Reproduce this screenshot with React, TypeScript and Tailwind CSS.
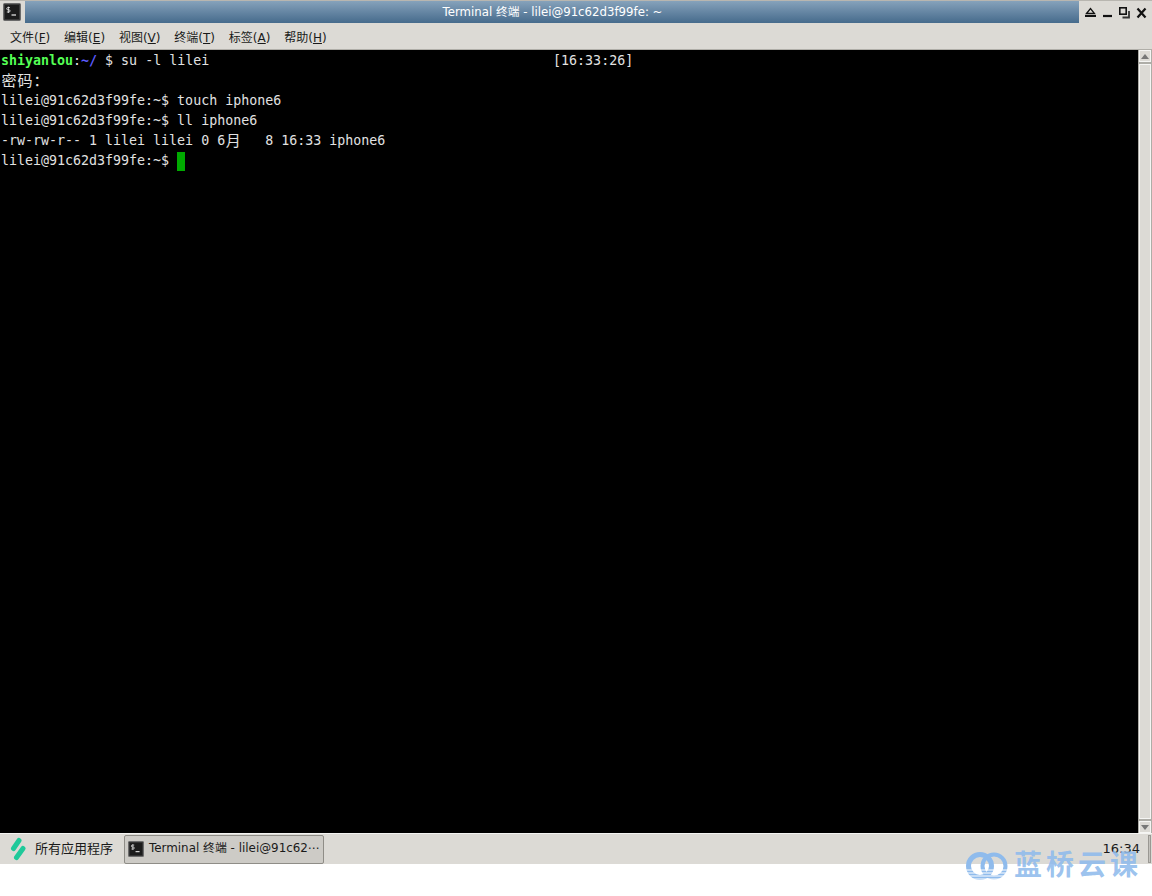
const termFont = "[font-family:'DejaVu_Sans_Mono','Noto_Sans_CJK_SC',monospace]";

function TerminalIcon({ size = 18 }: { size?: number }) {
  return (
    <svg width={size} height={size} viewBox="0 0 18 18">
      <rect x="0.5" y="0.5" width="17" height="17" rx="1" fill="#3a3a3a" stroke="#6a6a6a" />
      <rect x="2" y="2" width="14" height="14" fill="#1c1c1c" />
      <path d="M7 4.6H4.8a1 1 0 0 0 0 2.2h1.2a1 1 0 0 1 0 2.2H3.8M5.4 3.6v6.4" stroke="#eee" strokeWidth="0.8" fill="none" />
      <path d="M8.5 12h4.5" stroke="#eee" strokeWidth="1.2" />
    </svg>
  );
}

function MenuItem({ label, hot }: { label: string; hot: string }) {
  return (
    <span className="whitespace-nowrap">
      {label}(<span className="underline">{hot}</span>)
    </span>
  );
}

// double width glyph in the terminal grid
function Wide({ children }: { children: string }) {
  return <span className="inline-block w-4 text-[15px] leading-[20px] text-center align-top">{children}</span>;
}

const menus = [
  ["文件", "F"],
  ["编辑", "E"],
  ["视图", "V"],
  ["终端", "T"],
  ["标签", "A"],
  ["帮助", "H"],
];

export default function App() {
  return (
    <div className="w-[1152px] h-[896px] bg-white flex flex-col overflow-hidden font-['Liberation_Sans','Noto_Sans_CJK_SC',sans-serif] relative">
      {/* title bar */}
      <div className="h-[23px] flex items-stretch bg-[#dcdad5] border-t border-[#b8b6b0] shrink-0">
        <div className="w-[25px] flex items-center justify-start pl-[3px]">
          <TerminalIcon size={18} />
        </div>
        <div className="flex-1 bg-gradient-to-b from-[#86a2bb] to-[#466b8c] flex items-center justify-center pt-[2px] pl-px text-white text-[11.75px] [font-family:'DejaVu_Sans','Noto_Sans_CJK_SC',sans-serif]">
          Terminal 终端 - lilei@91c62d3f99fe: ~
        </div>
        <div className="w-[73px]">
          <svg width="73" height="22" viewBox="0 0 73 22">
            <path d="M7.5 12.5l4-5 4 5z" fill="none" stroke="#111" strokeWidth="1.3" />
            <path d="M6 15h11" stroke="#111" strokeWidth="2" />
            <path d="M24 15h9" stroke="#111" strokeWidth="2.2" />
            <rect x="40.8" y="6.8" width="6.4" height="6.4" fill="none" stroke="#111" strokeWidth="1.6" />
            <path d="M50 10v6.5h-6.5" fill="none" stroke="#333" strokeWidth="1.8" />
            <path d="M58.5 7.5l8 9M66.5 7.5l-8 9" stroke="#111" strokeWidth="2.2" />
          </svg>
        </div>
      </div>

      {/* menu bar */}
      <div className="h-[27px] bg-[#dcdad5] border-b border-[#b0aea8] flex items-center gap-[13.8px] pl-[10px] pt-[3px] text-[12px] text-[#1a1a1a] shrink-0 [font-family:'DejaVu_Sans','Noto_Sans_CJK_SC',sans-serif]">
        {menus.map(([label, hot]) => (
          <MenuItem key={hot} label={label} hot={hot} />
        ))}
      </div>

      {/* terminal + scrollbar */}
      <div className="h-[783px] flex shrink-0">
        <div className={`flex-1 bg-black text-[#e2e2e2] text-[13.3px] leading-[20px] pt-px pl-px whitespace-pre ${termFont}`}>
          <div className="flex">
            <span className="font-bold text-[#55ff55]">shiyanlou</span>
            <span>:</span>
            <span className="font-bold text-[#5c5cff]">~/</span>
            <span className="w-[456px]"> $ su -l lilei</span>
            <span>[16:33:26]</span>
          </div>
          <div>
            <Wide>密</Wide>
            <Wide>码</Wide>
            <Wide>：</Wide>
          </div>
          <div>lilei@91c62d3f99fe:~$ touch iphone6</div>
          <div>lilei@91c62d3f99fe:~$ ll iphone6</div>
          <div>
            -rw-rw-r-- 1 lilei lilei 0 6<Wide>月</Wide>   8 16:33 iphone6
          </div>
          <div className="flex">
            <span>lilei@91c62d3f99fe:~$ </span>
            <span className="w-2 h-[19px] mt-px bg-[#00aa00]" />
          </div>
        </div>
        <div className="w-[14px] bg-[#aeada7] flex flex-col pl-px pr-px">
          <div className="h-[12px] bg-[#dcdad5] border border-[#f5f5f3] flex items-center justify-center">
            <div className="w-0 h-0 border-x-[4px] border-x-transparent border-b-[5px] border-b-[#777]" />
          </div>
          <div className="flex-1 my-[2px] bg-[#dcdad5] border border-[#f5f5f3]" />
          <div className="h-[12px] bg-[#dcdad5] border border-[#f5f5f3] flex items-center justify-center">
            <div className="w-0 h-0 border-x-[4px] border-x-transparent border-t-[5px] border-t-[#777]" />
          </div>
        </div>
      </div>

      {/* task bar */}
      <div className="h-[31px] bg-[#dcdad5] border-t border-[#f4f4f2] flex items-center shrink-0 text-[12px] text-[#1a1a1a] [font-family:'DejaVu_Sans','Noto_Sans_CJK_SC',sans-serif]">
        <div className="w-[124px] flex items-center pl-[10px] gap-[9px]">
          <svg width="16" height="24" viewBox="0 0 16 24">
            <path d="M9 3.5L3.5 11.5" stroke="#1fc99a" strokeWidth="5" strokeLinecap="round" />
            <path d="M13 11.5L6.5 20.5" stroke="#1fc99a" strokeWidth="5" strokeLinecap="round" />
          </svg>
          <span className="text-[13px]">所有应用程序</span>
        </div>
        <div className="w-[200px] h-[29px] border border-[#8f8d87] rounded-[2px] bg-[#cdcbc6] flex items-center pl-[3px] gap-[5px]">
          <TerminalIcon size={16} />
          <span className="whitespace-nowrap text-[11.9px]">Terminal 终端 - lilei@91c62⋯</span>
        </div>
        <div className="flex-1 flex justify-end items-center pr-[12px] text-[13px]">16:34</div>
        <div className="absolute right-[1px] top-[835px] w-[3px] h-[28px] bg-[#c4c2bd] border border-[#9a9893]" />
      </div>

      {/* watermark */}
      <div className="absolute left-[966px] top-[851px] flex items-center gap-[6px] text-[#8fbbec]/90 pointer-events-none">
        <svg width="42" height="30" viewBox="0 0 42 30">
          <circle cx="14" cy="15" r="11.5" fill="none" stroke="#8fbbec" strokeWidth="5" />
          <circle cx="28" cy="15" r="11.5" fill="none" stroke="#8fbbec" strokeWidth="4" />
          <path d="M0 19h42M0 22h42M0 25h42M0 28h42" stroke="#ffffff" strokeWidth="1" />
        </svg>
        <span className="text-[28px] leading-[30px] tracking-[4px] font-bold">蓝桥云课</span>
      </div>
    </div>
  );
}
